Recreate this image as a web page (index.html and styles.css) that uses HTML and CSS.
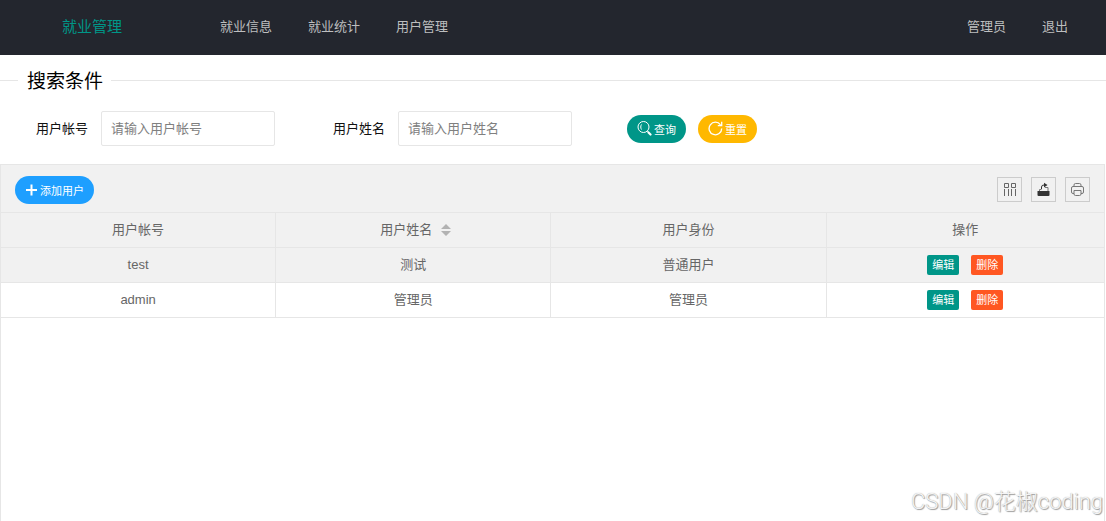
FILE: index.html
```
<!DOCTYPE html>
<html lang="zh-CN">
<head>
	<meta charset="utf-8">
	<title>用户管理</title>
	<link rel="stylesheet" href="styles.css">
</head>
<body>
<!-- 顶部导航 -->
<header class="header">
	<a class="logo" href="#">就业管理</a>
	<nav class="nav">
		<a href="#">就业信息</a>
		<a href="#">就业统计</a>
		<a href="#">用户管理</a>
	</nav>
	<nav class="nav nav-right">
		<a href="#">管理员</a>
		<a href="#">退出</a>
	</nav>
</header>

<!-- 搜索条件 -->
<form class="search-form">
	<fieldset class="search">
		<legend>搜索条件</legend>
		<div class="search-row">
			<div class="field">
				<label for="account">用户帐号</label>
				<input type="text" id="account" name="account" placeholder="请输入用户帐号">
			</div>
			<div class="field">
				<label for="username">用户姓名</label>
				<input type="text" id="username" name="username" placeholder="请输入用户姓名">
			</div>
			<div class="search-btns">
				<button type="button" class="btn btn-green">
					<svg width="15" height="15" viewBox="0 0 15 15" fill="none" stroke="#fff">
						<circle cx="6.500" cy="6" r="5.500"/>
						<path d="M4.500 3.500C3.500 5 3.500 7 4.500 8.500"/>
						<path d="M10.300 10l1 1"/>
						<path d="M11.500 11.500l2 2" stroke-width="2.200" stroke-linecap="round"/>
					</svg>
					<span>查询</span>
				</button>
				<button type="reset" class="btn btn-yellow">
					<svg width="15" height="15" viewBox="0 0 15 15" fill="none" stroke="#fff" stroke-width="1.300">
						<path d="M13.700 7.500A6.300 6.300 0 1 1 12.500 3.800"/>
						<path d="M13.700.8v3.800H9.800"/>
					</svg>
					<span>重置</span>
				</button>
			</div>
		</div>
	</fieldset>
</form>

<!-- 用户表格 -->
<main class="grid">
	<div class="toolbar">
		<button type="button" class="btn btn-blue">
			<svg width="13" height="12" viewBox="0 0 13 12" stroke="#fff" stroke-width="2">
				<path d="M6.500 .5v11M1 6h11"/>
			</svg>
			<span>添加用户</span>
		</button>
		<div class="tools">
			<button type="button" class="tool" aria-label="筛选列">
				<svg width="15" height="15" viewBox="0 0 15 15" fill="none" stroke="#666">
					<path d="M2.500 1.500h4v4h-4zM9.500 1.500h4v4h-4z"/>
					<path d="M2.500 7v7M6.500 7v7M9.500 7v7M13.500 7v7"/>
				</svg>
			</button>
			<button type="button" class="tool" aria-label="导出">
				<svg width="15" height="15" viewBox="0 0 15 15" fill="none" stroke="#333">
					<path d="M1.500 9h12v4q0 1-1 1h-10q-1 0-1-1z" fill="#333" stroke="none"/>
					<path d="M3.500 9V7.500h2M9 5.500h3V9" stroke="#777"/>
					<path d="M5.500 7V5q0-2 2.500-2h1"/>
					<path d="M8 .8L11.500 3 8 5.500z" fill="#333" stroke="none"/>
				</svg>
			</button>
			<button type="button" class="tool" aria-label="打印">
				<svg width="15" height="15" viewBox="0 0 15 15" fill="none" stroke="#777">
					<path d="M4 4.500V3q0-1.500 1.500-1.500h4Q11 1.500 11 3v1.500"/>
					<path d="M4 11.500H3q-1.500 0-1.500-1.500V6q0-1.500 1.500-1.500h9q1.500 0 1.500 1.500v4q0 1.500-1.500 1.500h-1"/>
					<path d="M4 8.500h7V12q0 1.500-1.500 1.500h-4Q4 13.500 4 12z"/>
				</svg>
			</button>
		</div>
	</div>
	<table class="table">
		<thead>
			<tr>
				<th>用户帐号</th>
				<th>
					<span class="sortable">用户姓名
						<svg width="10" height="12" viewBox="0 0 10 12" fill="#b2b2b2">
							<path d="M5 0l5 5H0zM0 7h10l-5 5z"/>
						</svg>
					</span>
				</th>
				<th>用户身份</th>
				<th>操作</th>
			</tr>
		</thead>
		<tbody>
			<tr class="hover">
				<td>test</td>
				<td>测试</td>
				<td>普通用户</td>
				<td>
					<div class="actions">
						<button type="button" class="btn-xs edit">编辑</button>
						<button type="button" class="btn-xs del">删除</button>
					</div>
				</td>
			</tr>
			<tr>
				<td>admin</td>
				<td>管理员</td>
				<td>管理员</td>
				<td>
					<div class="actions">
						<button type="button" class="btn-xs edit">编辑</button>
						<button type="button" class="btn-xs del">删除</button>
					</div>
				</td>
			</tr>
		</tbody>
	</table>
</main>
<div class="watermark">CSDN @花椒coding</div>
</body>
</html>
```
FILE: styles.css
```
* {
	box-sizing: border-box;
}
body {
	display: flex;
	flex-direction: column;
	min-height: 100vh;
	margin: 0;
	background: #fff;
	color: #111;
	font: 13px/20px "Liberation Sans", "Noto Sans CJK SC", sans-serif;
}
a {
	color: inherit;
	text-decoration: none;
}
button, input {
	font: inherit;
}
button {
	padding: 0;
	border: 0;
	color: #fff;
	cursor: pointer;
}
svg {
	display: block;
	flex: none;
}

/* 顶部导航 */
.header {
	display: flex;
	align-items: center;
	height: 55px;
	padding: 0 38px 1px 62px;
	background: #23262e;
	color: #bdbebf;
}
.logo {
	margin-right: 98px;
	color: #009688;
	font-size: 15px;
}
.nav {
	display: flex;
	gap: 36px;
}
.nav-right {
	margin-left: auto;
}

/* 搜索条件 */
.search {
	min-width: 0;
	margin: 12px 0 18px;
	padding: 0;
	border: 0;
	border-top: 1px solid #e6e6e6;
}
.search legend {
	margin-left: 18px;
	padding: 3px 8px 0 9px;
	color: #000;
	font-size: 19px;
	line-height: 24px;
}
.search-row {
	display: flex;
	align-items: center;
	padding: 17px 0 0 36px;
}
.field {
	display: flex;
	align-items: center;
	gap: 13px;
}
.field + .field {
	margin-left: 58px;
}
.field input {
	width: 174px;
	height: 35px;
	padding: 0 9px;
	border: 1px solid #e6e6e6;
	border-radius: 2px;
	outline: none;
}
.field input::placeholder {
	color: #808080;
}
.search-btns {
	display: flex;
	gap: 12px;
	margin-left: 55px;
}
.btn {
	display: flex;
	align-items: center;
	gap: 2px;
	height: 28px;
	padding: 0 10px;
	border-radius: 14px;
	font-size: 11px;
}
.btn span {
	padding-top: 2px;
}
.btn-green {
	background: #009688;
}
.btn-yellow {
	background: #ffb800;
}
.btn-blue {
	background: #1e9fff;
}

/* 表格 */
.grid {
	flex: 1;
	margin-right: 1px;
	border: 1px solid #e6e6e6;
	border-bottom: 0;
}
.toolbar {
	display: flex;
	align-items: center;
	justify-content: space-between;
	height: 48px;
	padding: 2px 14px 0;
	border-bottom: 1px solid #e6e6e6;
	background: #f1f1f1;
}
.tools {
	display: flex;
	gap: 9px;
}
.tool {
	display: flex;
	align-items: center;
	justify-content: center;
	width: 25px;
	height: 25px;
	border: 1px solid #ccc;
	background: none;
}
.table {
	width: 100%;
	table-layout: fixed;
	border-spacing: 0;
	color: #666;
}
.table th, .table td {
	height: 35px;
	padding: 0;
	border-right: 1px solid #e6e6e6;
	border-bottom: 1px solid #e6e6e6;
	font-weight: 400;
	text-align: center;
}
.table th {
	width: 24.95%;
}
.table th:last-child {
	width: auto;
}
.table th:last-child, .table td:last-child {
	border-right: 0;
}
.table thead, .hover {
	background: #f1f1f1;
}
.sortable {
	display: flex;
	align-items: center;
	justify-content: center;
	gap: 9px;
	padding-left: 5px;
}
.actions {
	display: flex;
	justify-content: center;
	gap: 12px;
}
.btn-xs {
	height: 20px;
	padding: 0 5px;
	border-radius: 2px;
	font-size: 11px;
}
.edit {
	background: #009688;
}
.del {
	background: #ff5722;
}

/* 水印 */
.watermark {
	position: absolute;
	right: 3px;
	bottom: 4px;
	color: #f4f4f4;
	font-family: Roboto, "Noto Sans CJK SC", sans-serif;
	font-size: 22px;
	font-weight: 300;
	line-height: 30px;
	text-shadow: 1px 1px 1px #999, 0 0 1px #aaa;
	pointer-events: none;
}
```
